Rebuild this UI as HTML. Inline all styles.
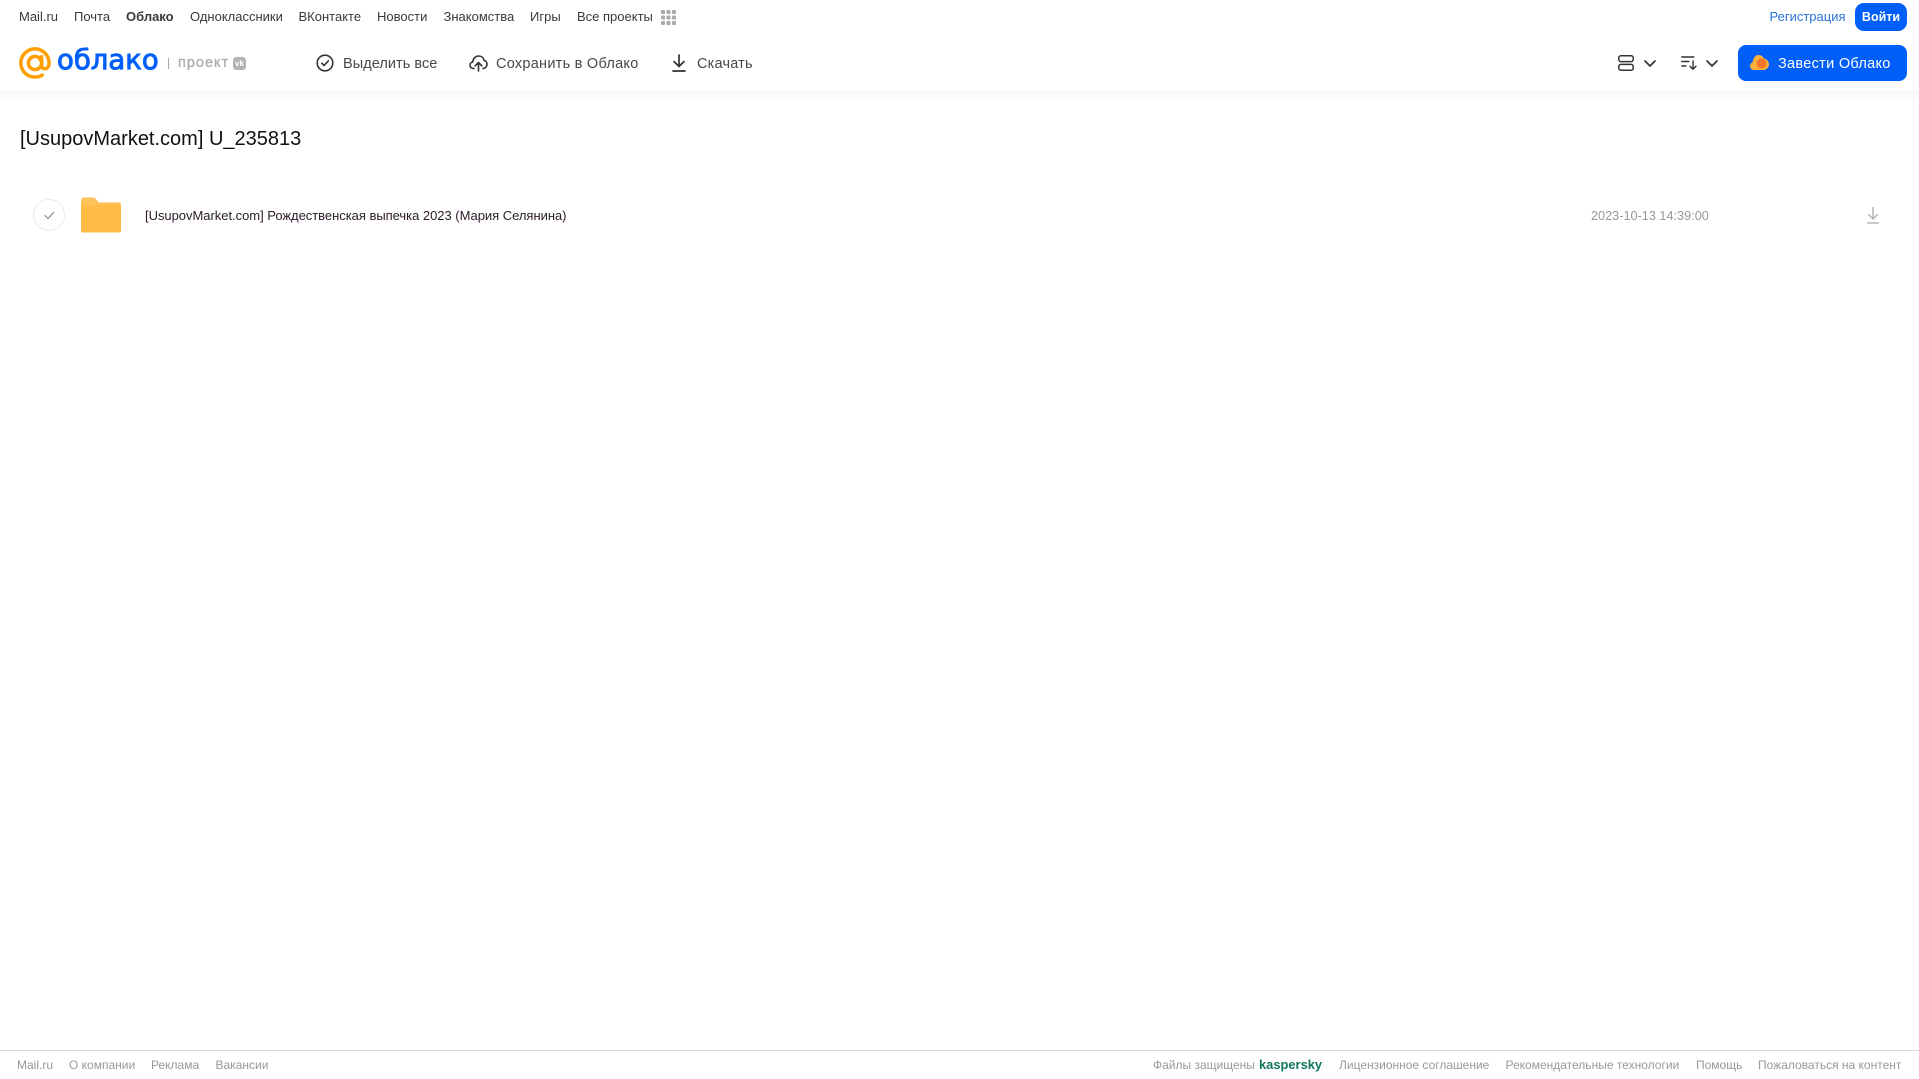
<!DOCTYPE html>
<html lang="ru"><head><meta charset="utf-8"><title>Облако</title>
<style>
html,body{margin:0;padding:0;background:#fff}
#p{position:relative;width:1919px;height:1079px;overflow:hidden;background:#fff;font-family:"Liberation Sans",Arial,sans-serif}
.t{position:absolute;white-space:nowrap;line-height:20px;margin:0;font-weight:normal}
.n{top:7px;font-size:13px;color:#3a3a3a}
.b{top:54px;font-size:14.5px;color:#484848}
.f{top:1055px;font-size:12px;color:#999}
svg{position:absolute;overflow:visible}
</style></head><body><div id="p">
<div style="position:absolute;left:0;top:91px;width:1919px;height:10px;background:linear-gradient(#f6f6f6,#fff)"></div>

<span class="t n" style="left:19px">Mail.ru</span>
<span class="t n" style="left:74px">Почта</span>
<span class="t n" style="left:126px;font-weight:bold">Облако</span>
<span class="t n" style="left:190px">Одноклассники</span>
<span class="t n" style="left:298.500px">ВКонтакте</span>
<span class="t n" style="left:377px">Новости</span>
<span class="t n" style="left:443.500px">Знакомства</span>
<span class="t n" style="left:530px">Игры</span>
<span class="t n" style="left:577px">Все проекты</span>
<svg style="left:661px;top:10px" width="15" height="15" fill="#aaa"><rect width="4" height="4" rx="1"/><rect x="5.500" width="4" height="4" rx="1"/><rect x="11" width="4" height="4" rx="1"/><rect y="5.500" width="4" height="4" rx="1"/><rect x="5.500" y="5.500" width="4" height="4" rx="1"/><rect x="11" y="5.500" width="4" height="4" rx="1"/><rect y="11" width="4" height="4" rx="1"/><rect x="5.500" y="11" width="4" height="4" rx="1"/><rect x="11" y="11" width="4" height="4" rx="1"/></svg>

<span class="t n" style="left:1769.500px;color:#2a74d8">Регистрация</span>
<div style="position:absolute;left:1855px;top:3px;width:52px;height:28px;background:#005ff9;border-radius:9px;color:#fff;font-size:12.500px;font-weight:bold;line-height:28px;text-align:center">Войти</div>

<svg style="left:19px;top:47px" width="32" height="32" viewBox="0 0 33 33" fill="none" stroke="#ff9e00" stroke-width="3.600"><circle cx="16.500" cy="16.500" r="6.800"/><path d="M23.300 10v8.500c0 5.500 7.700 5.500 7.700-2C31 8 24 1.900 16.500 1.900 8.400 1.900 1.900 8.400 1.900 16.500S8.400 31 16.500 31c3 0 5.300-.7 7.500-2" stroke-linecap="round"/></svg>
<span class="t" style="left:57px;top:42px;font-size:27.500px;line-height:36px;color:#005ff9;-webkit-text-stroke:.9px #005ff9;font-family:'DejaVu Sans',sans-serif">облако</span>
<div style="position:absolute;left:168px;top:58px;width:1px;height:11px;background:#aaa"></div>
<span class="t" style="left:178px;top:53px;font-size:14.500px;color:#aaa;-webkit-text-stroke:.3px #aaa;letter-spacing:1px">проект</span>
<div style="position:absolute;left:233px;top:57px;width:13px;height:13px;background:#b3b3b3;border-radius:3.500px;color:#fff;font-size:8px;font-weight:bold;line-height:13px;text-align:center">vk</div>

<svg style="left:316px;top:54px" width="18" height="18" viewBox="0 0 18 18" fill="none" stroke="#333" stroke-width="1.600"><circle cx="9" cy="9" r="7.800"/><path d="M5.800 9.200l2.300 2.300 4.200-4.600" stroke-linecap="round" stroke-linejoin="round"/></svg>
<span class="t b" style="left:343px;letter-spacing:.05px">Выделить все</span>
<svg style="left:469px;top:54px" width="19" height="18" viewBox="0 0 19 18" fill="none" stroke="#333" stroke-width="1.600" stroke-linecap="round" stroke-linejoin="round"><path d="M5 14.500H4.500C2.500 14.500 1 13 1 11.200 1 9.500 2.200 8.200 3.800 8 4 4.500 6.500 2 9.700 2c2.700 0 4.800 1.800 5.400 4.300 1.700.4 2.900 2 2.900 3.900 0 2.400-1.800 4.300-4 4.300"/><path d="M9.500 17V9M6.200 11.800l3.300-3.300 3.300 3.300"/></svg>
<span class="t b" style="left:496px;letter-spacing:.26px">Сохранить в Облако</span>
<svg style="left:671px;top:54px" width="16" height="18" viewBox="0 0 16 18" fill="none" stroke="#333" stroke-width="1.700" stroke-linecap="round" stroke-linejoin="round"><path d="M8 1v11M3 7.500L8 12.500 13 7.500M2 17h12"/></svg>
<span class="t b" style="left:697px;letter-spacing:.2px">Скачать</span>

<svg style="left:1618px;top:55px" width="16" height="16" viewBox="0 0 16 16" fill="none" stroke="#333" stroke-width="1.500"><rect x=".8" y=".8" width="14.400" height="5.800" rx="2"/><rect x=".8" y="9.400" width="14.400" height="5.800" rx="2"/></svg>
<svg style="left:1644px;top:60px" width="12" height="7" viewBox="0 0 12 7" fill="none" stroke="#333" stroke-width="1.700" stroke-linecap="round" stroke-linejoin="round"><path d="M1 1l5 5 5-5"/></svg>
<svg style="left:1681px;top:56px" width="17" height="14" viewBox="0 0 17 14" fill="none" stroke="#333" stroke-width="1.400" stroke-linecap="round" stroke-linejoin="round"><path d="M.8 1h12M.8 5.500h7M.8 10h4M12 5v8M9 10.300l3 3 3-3"/></svg>
<svg style="left:1706px;top:60px" width="12" height="7" viewBox="0 0 12 7" fill="none" stroke="#333" stroke-width="1.700" stroke-linecap="round" stroke-linejoin="round"><path d="M1 1l5 5 5-5"/></svg>

<div style="position:absolute;left:1738px;top:45px;width:169px;height:36px;background:#005ff9;border-radius:8px"></div>
<svg style="left:1750px;top:54px" width="19" height="16" viewBox="0 0 19 16"><path d="M4 16C1.800 16 0 14.300 0 12c0-1.800 1.100-3.200 2.700-3.800C3 4 5.500 1 8.500 1c2.500 0 4.500 1.400 5.400 3.500C16.800 5 19 7.400 19 10.300 19 13.500 16.500 16 13.300 16z" fill="#ffb03b"/><circle cx="11.500" cy="9.500" r="5" fill="#f5762b"/></svg>
<span class="t" style="left:1778px;top:54px;font-size:14.500px;letter-spacing:.3px;color:#fff">Завести Облако</span>

<h1 class="t" style="left:20px;top:126px;font-size:20px;line-height:26px;color:#111">[UsupovMarket.com] U_235813</h1>

<svg style="left:33px;top:199px" width="32" height="32" viewBox="0 0 32 32" fill="none"><circle cx="16" cy="16" r="15.500" stroke="#ebebeb"/><path d="M12 16.500l3 3 5.500-6" stroke="#999" stroke-width="1.300" stroke-linecap="round" stroke-linejoin="round"/></svg>
<svg style="left:81px;top:197px" width="40" height="36" viewBox="0 0 41 36"><path d="M3 0h9c2 0 3 1 4 2.500L18 5h21a2 2 0 0 1 2 2v27a2 2 0 0 1-2 2H2a2 2 0 0 1-2-2V3a3 3 0 0 1 3-3z" fill="#ffc25a"/><path d="M0 10a2 2 0 0 1 2-2h37a2 2 0 0 1 2 2v24a2 2 0 0 1-2 2H2a2 2 0 0 1-2-2z" fill="#ffbb46"/></svg>
<span class="t" style="left:145px;top:206px;font-size:13px;letter-spacing:-.03px;color:#2a1a2a">[UsupovMarket.com] Рождественская выпечка 2023 (Мария Селянина)</span>
<span class="t" style="left:1591px;top:206px;font-size:12.700px;color:#999">2023-10-13 14:39:00</span>
<svg style="left:1866px;top:207px" width="14" height="17" viewBox="0 0 14 17" fill="none" stroke="#aaa" stroke-width="1.300"><path d="M7 0v12M2.500 7.500L7 12l4.500-4.500M1 16h12"/></svg>

<div style="position:absolute;left:0;top:1050px;width:1919px;height:1px;background:#d8d8d8"></div>
<span class="t f" style="left:17px">Mail.ru</span>
<span class="t f" style="left:69px">О компании</span>
<span class="t f" style="left:151px">Реклама</span>
<span class="t f" style="left:215.500px">Вакансии</span>
<span class="t f" style="left:1153px">Файлы защищены</span>
<span class="t f" style="left:1259px;font-weight:bold;font-size:12.900px;color:#12775f">kaspersky</span>
<span class="t f" style="left:1339px">Лицензионное соглашение</span>
<span class="t f" style="left:1505.500px">Рекомендательные технологии</span>
<span class="t f" style="left:1696px">Помощь</span>
<span class="t f" style="left:1758px">Пожаловаться на контент</span>
</div></body></html>
